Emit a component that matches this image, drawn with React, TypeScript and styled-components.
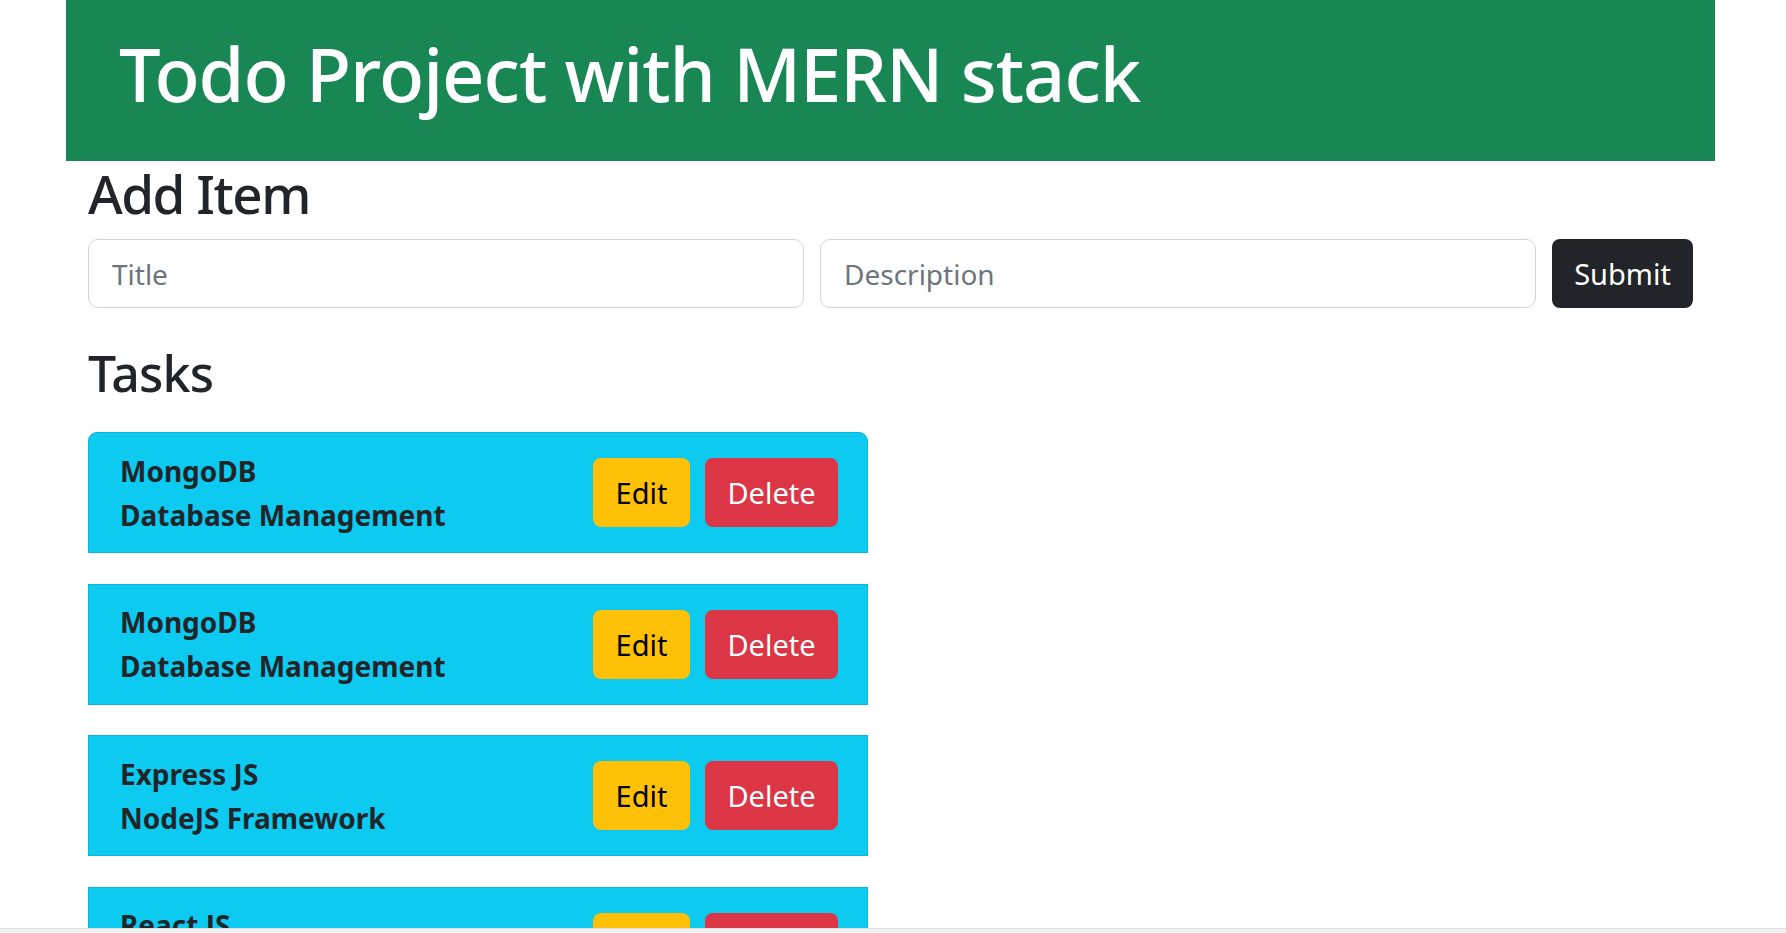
import React from "react";
import styled, { createGlobalStyle } from "styled-components";

const GlobalStyle = createGlobalStyle`
  html, body {
    margin: 0;
    padding: 0;
    background: #ffffff;
    font-family: "Noto Sans", "Open Sans", sans-serif;
    color: #212529;
  }
  * { box-sizing: border-box; }
`;

const Page = styled.div`
  margin-left: 66px;
  width: 1649px;
`;

const Header = styled.header`
  height: 161px;
  background: #198754;
  padding: 28px 0 0 53px;
`;

const AppTitle = styled.h1`
  margin: 0;
  color: #ffffff;
  font-size: 74px;
  line-height: 91px;
  font-weight: 500;
  letter-spacing: -1px;
  white-space: nowrap;
`;

const Main = styled.main`
  padding: 0 22px;
`;

const SectionTitle = styled.h2<{ $size: number; $lh: number; $mt: number; $ls: number }>`
  margin: ${(p) => p.$mt}px 0 0;
  font-size: ${(p) => p.$size}px;
  line-height: ${(p) => p.$lh}px;
  letter-spacing: ${(p) => p.$ls}px;
  font-weight: 500;
  color: #212529;
`;

const FormRow = styled.form`
  display: flex;
  gap: 16px;
  margin-top: 14px;
`;

const TextInput = styled.input`
  flex: 1;
  min-width: 0;
  height: 69px;
  border: 1px solid #ced4da;
  border-radius: 10px;
  padding: 0 23px;
  font-family: inherit;
  font-size: 28px;
  color: #212529;
  background: #fff;
  outline: none;
  &::placeholder {
    color: #6c757d;
  }
`;

const Button = styled.button<{ $variant: "dark" | "warning" | "danger"; $w: number }>`
  flex: none;
  width: ${(p) => p.$w}px;
  height: 69px;
  border: none;
  border-radius: 8px;
  font-family: inherit;
  font-size: 29px;
  font-weight: 400;
  padding: 0;
  cursor: pointer;
  background: ${(p) =>
    p.$variant === "dark" ? "#212529" : p.$variant === "warning" ? "#ffc107" : "#dc3545"};
  color: ${(p) => (p.$variant === "warning" ? "#000000" : "#ffffff")};
`;

const TaskList = styled.ul`
  list-style: none;
  margin: 30px 0 0;
  padding: 0;
  width: 780px;
  display: flex;
  flex-direction: column;
  gap: 30.5px;
`;

const TaskItem = styled.li`
  height: 121px;
  background: #0dcaf0;
  border: 1px solid #0bb5d8;
  padding: 0 29px 0 31px;
  display: flex;
  align-items: center;
  justify-content: space-between;
  &:first-child {
    border-top-left-radius: 9px;
    border-top-right-radius: 9px;
  }
`;

const TaskText = styled.div`
  display: flex;
  flex-direction: column;
  font-size: 28px;
  line-height: 44px;
  font-weight: 700;
  color: #212529;
`;

const Actions = styled.div`
  display: flex;
  gap: 15px;
`;

const BottomEdge = styled.div`
  position: fixed;
  left: 0;
  right: 0;
  bottom: 0;
  height: 5px;
  background: #f1f1f1;
  border-top: 1px solid #dedede;
`;

const tasks = [
  { title: "MongoDB", description: "Database Management" },
  { title: "MongoDB", description: "Database Management" },
  { title: "Express JS", description: "NodeJS Framework" },
  { title: "React JS", description: "Frontend Library" },
];

export default function App() {
  return (
    <>
      <GlobalStyle />
      <Page>
        <Header>
          <AppTitle>Todo Project with MERN stack</AppTitle>
        </Header>
        <Main>
          <SectionTitle $size={53} $lh={62} $mt={2} $ls={-1.5}>
            Add Item
          </SectionTitle>
          <FormRow onSubmit={(e) => e.preventDefault()}>
            <TextInput placeholder="Title" />
            <TextInput placeholder="Description" />
            <Button type="submit" $variant="dark" $w={141}>
              Submit
            </Button>
          </FormRow>
          <SectionTitle $size={50} $lh={58} $mt={36} $ls={-0.8}>
            Tasks
          </SectionTitle>
          <TaskList>
            {tasks.map((t, i) => (
              <TaskItem key={i}>
                <TaskText>
                  <span>{t.title}</span>
                  <span>{t.description}</span>
                </TaskText>
                <Actions>
                  <Button type="button" $variant="warning" $w={97}>
                    Edit
                  </Button>
                  <Button type="button" $variant="danger" $w={133}>
                    Delete
                  </Button>
                </Actions>
              </TaskItem>
            ))}
          </TaskList>
        </Main>
      </Page>
      <BottomEdge />
    </>
  );
}
